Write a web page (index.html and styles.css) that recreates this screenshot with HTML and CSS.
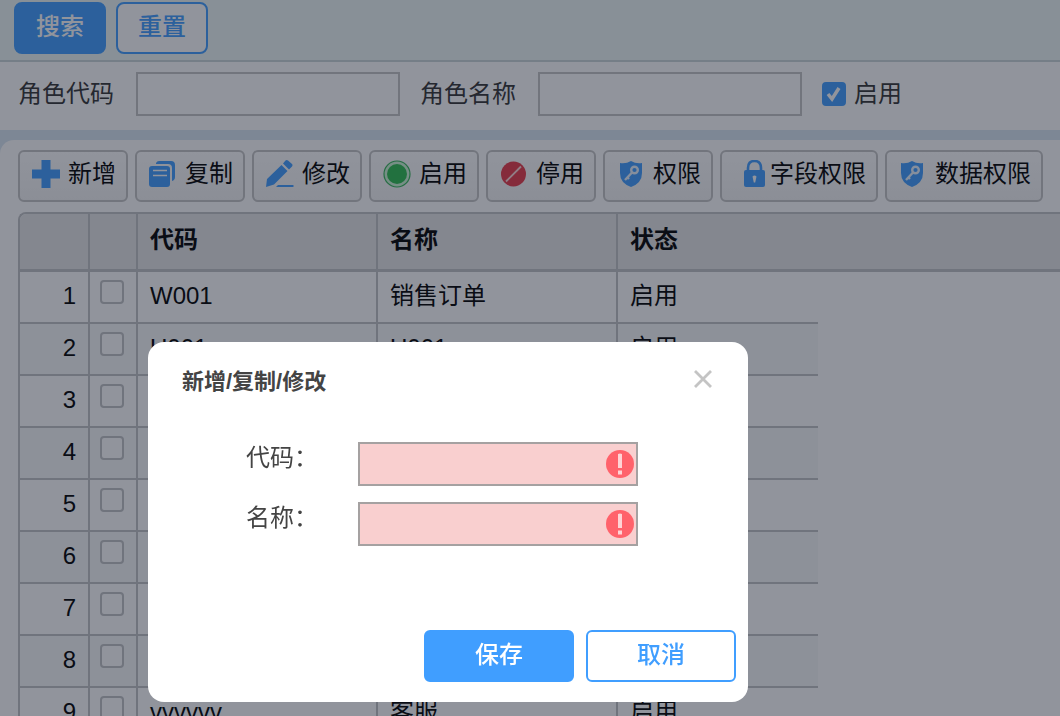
FILE: index.html
```html
<!DOCTYPE html>
<html lang="zh-CN">
<head>
    <meta charset="UTF-8">
    <title>角色管理</title>
    <link rel="stylesheet" href="styles.css">
</head>
<body>
    <div class="page">
        <div class="top-bar">
            <button type="button" class="btn btn-primary">搜索</button>
            <button type="button" class="btn btn-plain">重置</button>
        </div>

        <form class="search-form">
            <label for="roleCode">角色代码</label>
            <input type="text" id="roleCode">
            <label for="roleName">角色名称</label>
            <input type="text" id="roleName">
            <label class="check-label"><input type="checkbox" class="check" checked>启用</label>
        </form>

        <div class="panel">
            <div class="toolbar">
                <button type="button" class="tool">
                    <svg class="icon" viewBox="0 0 28 28"><path fill="#409eff" d="M9.500 0h9v9.500H28v9h-9.500V28h-9v-9.500H0v-9h9.500z"/></svg>新增
                </button>
                <button type="button" class="tool">
                    <svg class="icon" viewBox="0 0 28 28"><path fill="#409eff" d="M7 3q1-2 3-2h12q4 0 4 4v12q0 3-3 4V8q0-4-4-4H7z"/><path fill="#409eff" d="M3 6h15q3 0 3 3v15q0 3-3 3H3q-3 0-3-3V9q0-3 3-3z"/><path stroke="#fff" stroke-width="1.6" d="M4 10.500h14M4 15.500h14"/></svg>复制
                </button>
                <button type="button" class="tool">
                    <svg class="icon" viewBox="0 0 28 28"><path fill="#409eff" d="M15.500 5l6 6L8 24.500 0 27l1-8zM17 3.500l2.500-3q1.200-1 2.500 0l4 3.500q1 1.200 0 2.400L23 9.500zM12 25h15q1.500 1 0 2H10z"/></svg>修改
                </button>
                <button type="button" class="tool">
                    <svg class="icon" viewBox="0 0 28 28"><circle cx="14" cy="14" r="13" fill="#cdf5d5" stroke="#35b558" stroke-width="1.200"/><circle cx="14" cy="14" r="10" fill="#2fbe50"/></svg>启用
                </button>
                <button type="button" class="tool">
                    <svg class="icon" viewBox="0 0 28 28"><circle cx="13.500" cy="14" r="12.500" fill="#e83a48"/><path stroke="#ffd5d5" stroke-width="1.800" d="M6 21.500L21 6.500"/></svg>停用
                </button>
                <button type="button" class="tool">
                    <svg class="icon" viewBox="0 0 28 28"><path fill="#409eff" d="M14 1q5 3 11 2v10q0 10-11 14Q3 23 3 13V3q6 1 11-2z"/><circle cx="17.500" cy="10" r="3.300" fill="none" stroke="#e8f3ff" stroke-width="2.400"/><path stroke="#e8f3ff" stroke-width="2.400" d="M15 12.500L8 20M10 17l2 2"/></svg>权限
                </button>
                <button type="button" class="tool">
                    <svg class="icon icon-lock" viewBox="0 0 36 28"><path fill="none" stroke="#409eff" stroke-width="2.600" d="M14 12V8q0-7 6.500-7T27 8v4"/><rect x="10" y="10" width="21" height="17" rx="2" fill="#409eff"/><path fill="#fff" d="M18.500 16.500q2-2 4 0l-1.300 6h-1.400z"/></svg>字段权限
                </button>
                <button type="button" class="tool">
                    <svg class="icon" viewBox="0 0 28 28"><path fill="#409eff" d="M13 1q5 3 11 2v10q0 10-11 14Q2 23 2 13V3q6 1 11-2z"/><circle cx="16.500" cy="10" r="3.300" fill="none" stroke="#e8f3ff" stroke-width="2.400"/><path stroke="#e8f3ff" stroke-width="2.400" d="M14 12.500L7 20M9 17l2 2"/></svg>数据权限
                </button>
            </div>

            <table class="grid">
                <colgroup>
                    <col class="col-num"><col class="col-check"><col class="col-text"><col class="col-text"><col class="col-state"><col>
                </colgroup>
                <thead>
                    <tr><th></th><th></th><th>代码</th><th>名称</th><th>状态</th><th></th></tr>
                </thead>
                <tbody>
                    <tr><td>1</td><td><input type="checkbox" class="check" aria-label="选择 1"></td><td>W001</td><td>销售订单</td><td>启用</td></tr>
                    <tr><td>2</td><td><input type="checkbox" class="check" aria-label="选择 2"></td><td>U001</td><td>U001</td><td>启用</td></tr>
                    <tr><td>3</td><td><input type="checkbox" class="check" aria-label="选择 3"></td><td></td><td></td><td></td></tr>
                    <tr><td>4</td><td><input type="checkbox" class="check" aria-label="选择 4"></td><td></td><td></td><td></td></tr>
                    <tr><td>5</td><td><input type="checkbox" class="check" aria-label="选择 5"></td><td></td><td></td><td></td></tr>
                    <tr><td>6</td><td><input type="checkbox" class="check" aria-label="选择 6"></td><td></td><td></td><td></td></tr>
                    <tr><td>7</td><td><input type="checkbox" class="check" aria-label="选择 7"></td><td></td><td></td><td></td></tr>
                    <tr><td>8</td><td><input type="checkbox" class="check" aria-label="选择 8"></td><td></td><td></td><td></td></tr>
                    <tr><td>9</td><td><input type="checkbox" class="check" aria-label="选择 9"></td><td>vvvvvv</td><td>客服</td><td>启用</td></tr>
                </tbody>
            </table>
        </div>
    </div>

    <div class="modal" id="modal">
        <form class="modal-content" role="dialog" aria-labelledby="modalTitle">
            <div class="modal-header">
                <h2 id="modalTitle">新增/复制/修改</h2>
                <button type="button" class="close" aria-label="关闭">
                    <svg viewBox="0 0 18 18"><path fill="none" stroke="#c4c4c4" stroke-width="2.800" d="M1 1l16 16M17 1L1 17"/></svg>
                </button>
            </div>
            <div class="modal-body">
                <div class="field">
                    <label for="code">代码：</label>
                    <div class="field-box">
                        <input type="text" id="code">
                        <svg class="error" viewBox="0 0 28 28"><circle cx="14" cy="14" r="14" fill="#ff626b"/><path fill="#ffd3d5" d="M12 4q2-1 4 0v14h-4zM12 20.500h4v4h-4z"/></svg>
                    </div>
                </div>
                <div class="field">
                    <label for="name">名称：</label>
                    <div class="field-box">
                        <input type="text" id="name">
                        <svg class="error" viewBox="0 0 28 28"><circle cx="14" cy="14" r="14" fill="#ff626b"/><path fill="#ffd3d5" d="M12 4q2-1 4 0v14h-4zM12 20.500h4v4h-4z"/></svg>
                    </div>
                </div>
            </div>
            <div class="modal-footer">
                <button type="button" class="btn btn-primary">保存</button>
                <button type="button" class="btn btn-plain">取消</button>
            </div>
        </form>
    </div>
</body>
</html>
```

FILE: styles.css
```css
* {
    box-sizing: border-box;
}
body {
    margin: 0;
    height: 100vh;
    overflow: hidden;
    background-color: #d9e6f1;
    color: #000;
    font-family: "Liberation Sans", "Noto Sans CJK SC", sans-serif;
    font-size: 24px;
    line-height: 32px;
}
button, input {
    font: inherit;
}
button {
    cursor: pointer;
}
.page {
    display: flex;
    flex-direction: column;
    min-height: 100vh;
}

/* buttons */
.btn {
    width: 92px;
    height: 52px;
    padding: 0 0 2px;
    border: 2px solid #409eff;
    border-radius: 8px;
    font-weight: 500;
}
.btn-primary {
    background-color: #409eff;
    color: #fff;
}
.btn-plain {
    background-color: #fff;
    color: #409eff;
}

/* search */
.top-bar {
    display: flex;
    gap: 10px;
    padding: 2px 14px 6px;
    background-color: #eef7f6;
    border-bottom: 2px solid #cbd5d8;
}
.search-form {
    display: flex;
    align-items: center;
    padding: 10px 18px 14px;
    background-color: #fff;
    color: #333;
}
.search-form input[type="text"] {
    width: 264px;
    height: 44px;
    margin: 0 20px 0 22px;
    padding: 0 8px;
    border: 2px solid #c4c4c4;
    background-color: #fff;
}
.check-label {
    display: flex;
    align-items: center;
    gap: 8px;
}
.check {
    appearance: none;
    display: block;
    width: 24px;
    height: 24px;
    margin: 0;
    border: 2px solid #c0c2c4;
    border-radius: 4px;
    background-color: #fff;
}
.check:checked {
    border-color: #409eff;
    background: #409eff url("data:image/svg+xml,%3Csvg xmlns='http://www.w3.org/2000/svg' viewBox='0 0 20 20'%3E%3Cpath d='M4 10l4 5 7-11' fill='none' stroke='%23fff' stroke-width='3.500'/%3E%3C/svg%3E") center / 20px no-repeat;
}

/* list */
.panel {
    flex: 1;
    margin-top: 10px;
    padding: 10px 0 0 18px;
    border-top-left-radius: 14px;
    background-color: #fff;
}
.toolbar {
    display: flex;
    gap: 7px;
    margin-bottom: 10px;
}
.tool {
    display: flex;
    align-items: center;
    height: 52px;
    padding: 0 10px 4px 12px;
    border: 2px solid #c4c4c4;
    border-radius: 6px;
    background: linear-gradient(#fff, #f4f4f4);
    color: #000;
    white-space: nowrap;
}
.icon {
    flex: none;
    width: 28px;
    height: 28px;
    margin-right: 8px;
}
.icon-lock {
    width: 36px;
    margin-right: 0;
}
.grid {
    width: 100%;
    table-layout: fixed;
    border-collapse: separate;
    border-spacing: 0;
    border: 2px solid #c0c2c4;
    border-right: none;
    border-top-left-radius: 8px;
    overflow: hidden;
}
.col-num {
    width: 70px;
}
.col-check {
    width: 48px;
}
.col-text {
    width: 240px;
}
.col-state {
    width: 200px;
}
.grid th {
    height: 58px;
    padding: 0 12px 4px;
    border-right: 2px solid #c0c2c4;
    border-bottom: 3px solid #c0c2c4;
    background-color: #e6e6e6;
    text-align: left;
}
.grid td {
    height: 52px;
    padding: 0 12px 2px;
    border-right: 2px solid #c0c2c4;
    border-bottom: 2px solid #c0c2c4;
}
.grid th:nth-child(n+5), .grid td:nth-child(5) {
    border-right: none;
}
.grid td:first-child {
    text-align: right;
}
.grid td:nth-child(2) {
    padding: 0 10px 10px;
}
.grid tbody tr:nth-child(even) td {
    background-color: #f7f9fa;
}

/* dialog */
.modal {
    position: fixed;
    inset: 0;
    padding: 342px 0 0 148px;
    background-color: rgba(21, 28, 45, 0.47);
}
.modal-content {
    display: flex;
    flex-direction: column;
    width: 600px;
    border-radius: 16px;
    background-color: #fff;
    color: #444;
}
.modal-header {
    display: flex;
    justify-content: space-between;
    align-items: center;
    padding: 24px 36px 0 34px;
}
.modal-header h2 {
    margin: 0;
    font-size: 22px;
    line-height: 32px;
}
.close {
    display: flex;
    padding: 0 0 6px;
    border: none;
    background: none;
}
.close svg {
    width: 18px;
    height: 18px;
}
.modal-body {
    display: flex;
    flex-direction: column;
    gap: 16px;
    padding: 44px 98px 84px;
}
.field {
    display: flex;
    justify-content: space-between;
}
.field-box {
    position: relative;
    width: 280px;
    margin-right: 12px;
}
.field-box input {
    display: block;
    width: 100%;
    height: 44px;
    padding: 0 36px 0 8px;
    border: 2px solid #a5a1a1;
    background-color: #f9cfcf;
}
.error {
    position: absolute;
    top: 8px;
    right: 4px;
    width: 28px;
    height: 28px;
}
.modal-footer {
    display: flex;
    justify-content: flex-end;
    gap: 12px;
    padding: 0 12px 20px;
}
.modal-footer .btn {
    width: 150px;
    border-radius: 6px;
}
```
